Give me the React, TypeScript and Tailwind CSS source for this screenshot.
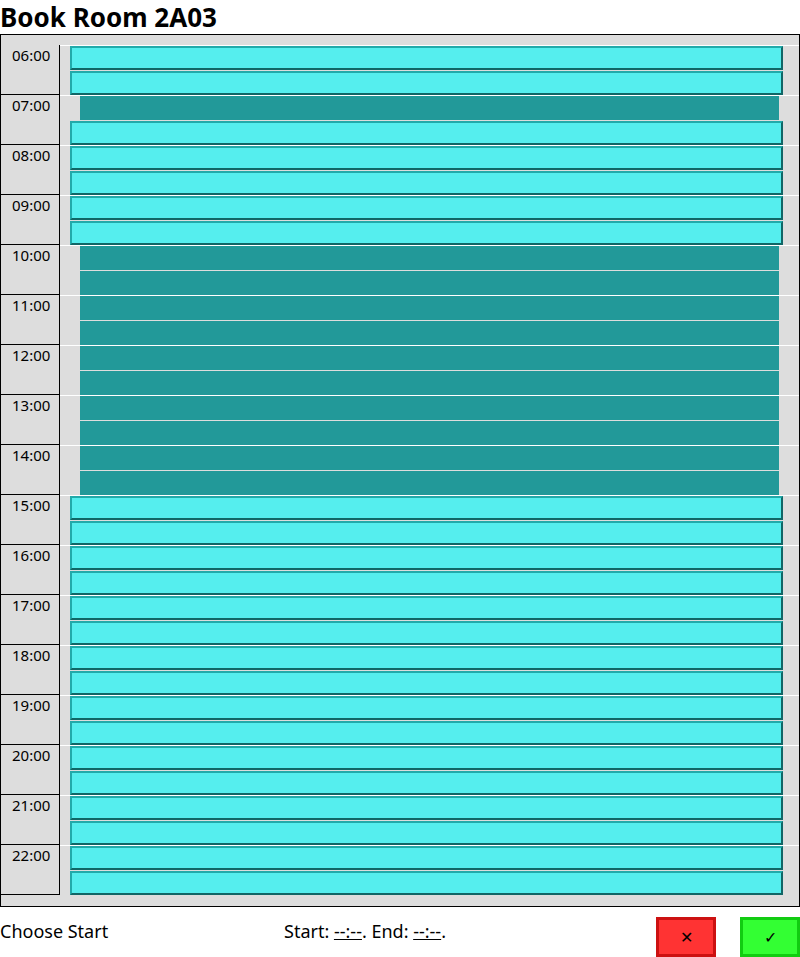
import React from "react";

const hours = ["06:00","07:00","08:00","09:00","10:00","11:00","12:00","13:00","14:00","15:00","16:00","17:00","18:00","19:00","20:00","21:00","22:00"];
const booked = (h: number, half: number) => (h === 1 && half === 0) || (h >= 4 && h <= 8);

function Slot({ b }: { b: boolean }) {
  if (b) return <div className="h-full mx-[20px] bg-[#229999]" />;
  return (
    <div className="h-full ml-[10px] mr-[16px] bg-[#55eeee] border-2 border-t-[#22aaaa] border-l-[#22aaaa] border-b-[#116666] border-r-[#116666]" />
  );
}

export default function App() {
  return (
    <div className="w-[800px] font-['Liberation_Serif',serif] text-black bg-white">
      <h1 className="text-[26px] font-bold leading-[34px]">Book Room 2A03</h1>
      <div className="border border-black bg-[#dddddd] pt-[10px] pb-[11px]">
        {hours.map((t, i) => (
          <div key={t} className="flex h-[50px]">
            <div className="w-[59px] border-r border-b border-black text-[15px] pl-[11px] pt-[1px] leading-[18px]">{t}</div>
            <div className="flex-1 border-t border-white flex flex-col">
              <div className="h-[24px]"><Slot b={booked(i, 0)} /></div>
              <div className="h-[25px] pt-px"><Slot b={booked(i, 1)} /></div>
            </div>
          </div>
        ))}
      </div>
      <div className="flex items-start text-[18px] pt-[10px]">
        <div className="w-[284px] pt-[1px]">Choose Start</div>
        <div className="flex-1 pt-[1px]">
          Start: <span className="underline">--:--</span>. End: <span className="underline">--:--</span>.
        </div>
        <button className="w-[60px] h-[40px] bg-[#ff3333] border-[3px] border-[#cc1111] text-[16px] font-['DejaVu_Sans',sans-serif] mr-[24px]">✕</button>
        <button className="w-[60px] h-[40px] bg-[#33ff33] border-[3px] border-[#11cc11] text-[16px] font-['DejaVu_Sans',sans-serif]">✓</button>
      </div>
    </div>
  );
}
